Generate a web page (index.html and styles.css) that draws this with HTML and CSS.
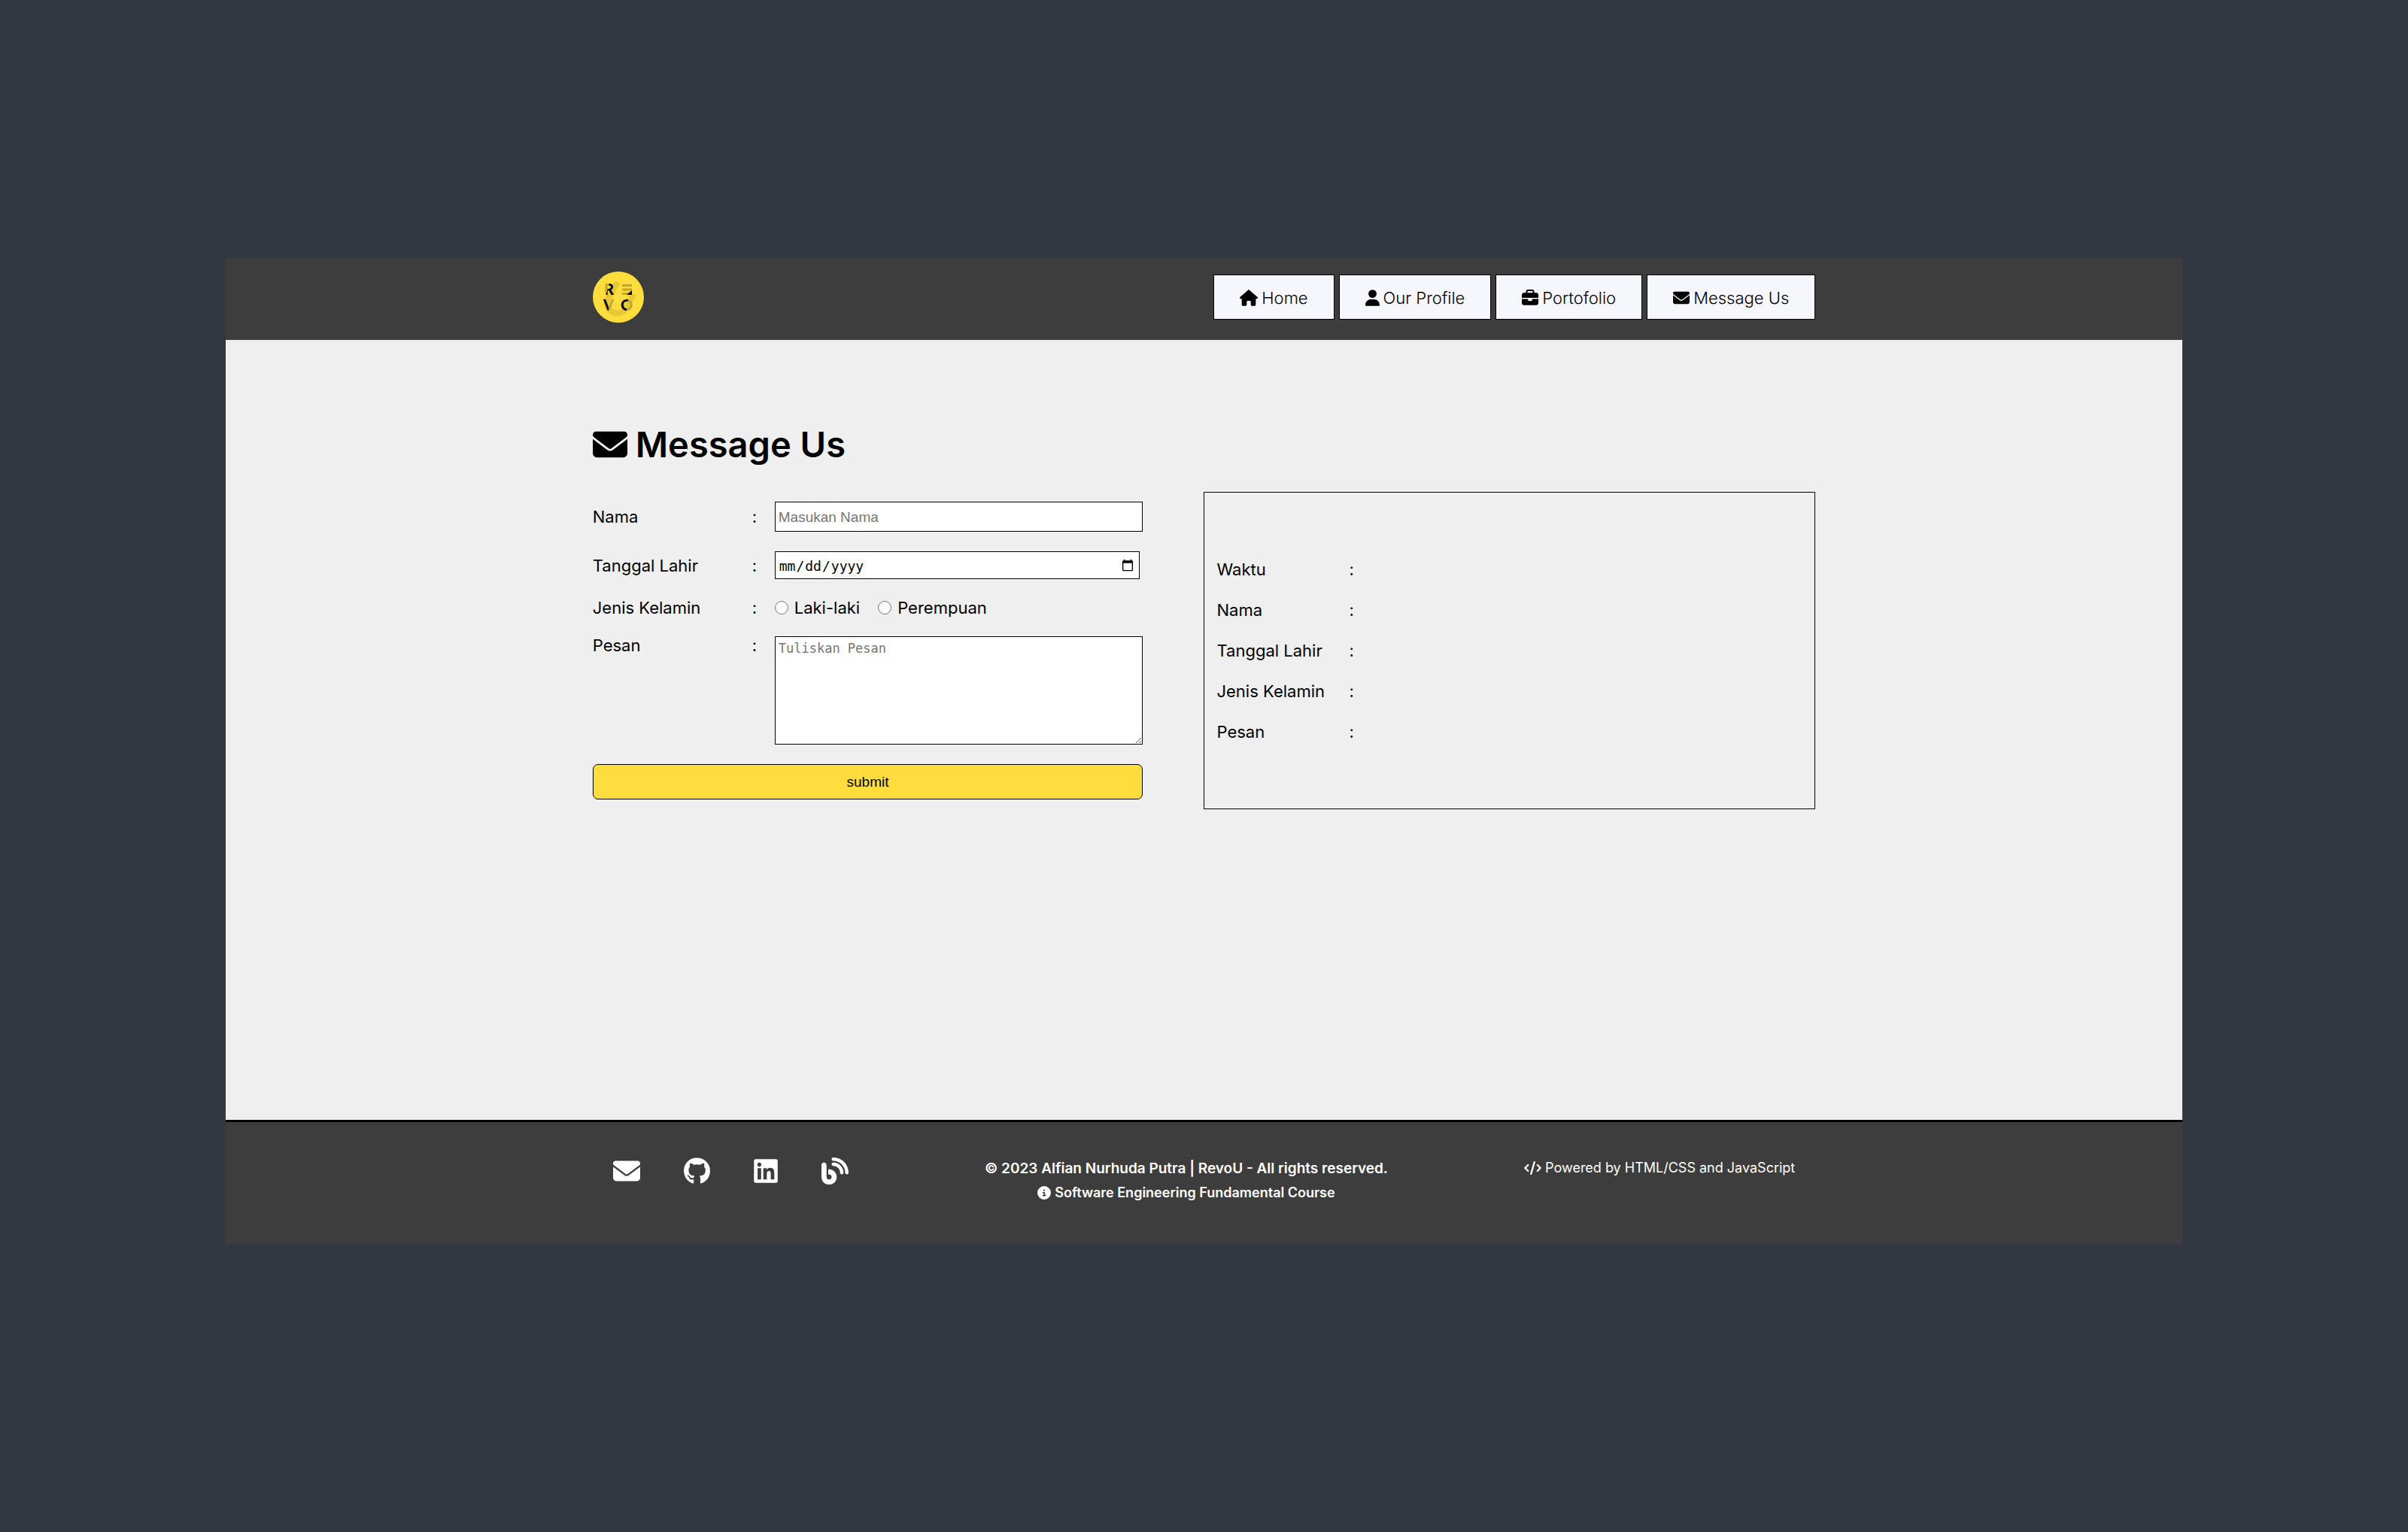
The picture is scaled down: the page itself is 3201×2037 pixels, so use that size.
FILE: index.html
```html
<!DOCTYPE html>
<html lang="id">
<head>
<meta charset="utf-8">
<meta name="viewport" content="width=device-width, initial-scale=1">
<title>Message Us</title>
<link rel="stylesheet" href="styles.css">
</head>
<body>
<svg class="sprite" aria-hidden="true">
  <symbol id="envelope" viewBox="0 0 512 512"><path d="M48 64C21.5 64 0 85.5 0 112c0 15.1 7.1 29.3 19.2 38.4L236.8 313.6c11.4 8.5 27 8.5 38.4 0L492.8 150.4c12.1-9.1 19.2-23.3 19.2-38.4c0-26.5-21.5-48-48-48H48zM0 176V384c0 35.3 28.7 64 64 64H448c35.3 0 64-28.7 64-64V176L294.4 339.2c-22.8 17.1-54 17.1-76.8 0L0 176z"/></symbol>
</svg>
<div class="shell">
  <header class="header">
    <div class="container header-row">
      <a class="logo" href="#" aria-label="RevoU">
        <svg viewBox="0 0 68 68" width="68" height="68">
          <defs>
            <linearGradient id="fadeLeft" x1="0" x2="1" y1="0" y2="0.5"><stop offset="0.45" stop-color="#c2a630"/><stop offset="0.5" stop-color="#0a0800"/></linearGradient>
            <linearGradient id="fadeRight" x1="0" x2="1" y1="0" y2="0.2"><stop offset="0.6" stop-color="#0a0800"/><stop offset="0.65" stop-color="#c2a630"/></linearGradient>
          </defs>
          <circle cx="34" cy="34" r="34" fill="#ffdd3d"/>
          <path d="M33 14 21 35a13 13 0 0 0 23 14L54 30" fill="none" stroke="#e8c935" stroke-width="8"/>
          <g class="logo-letters">
            <text x="15" y="31" fill="url(#fadeLeft)">R</text>
            <text x="14" y="52" fill="url(#fadeRight)">V</text>
            <text x="37" y="52" fill="url(#fadeRight)">O</text>
          </g>
          <path d="M39 18.500h13M39 24h13M39 29.500h13" stroke="#c2a630" stroke-width="3"/>
          <path d="M52 25v6h-7z" fill="#0a0800"/>
        </svg>
      </a>
      <nav class="nav">
        <a href="#"><svg class="icon" viewBox="0 0 576 512" width="24" height="22"><path d="M575.8 255.500c0 18-15 32.100-32 32.100h-32l.7 160.200c0 2.700-.2 5.400-.5 8.100V472c0 22.100-17.900 40-40 40H392c-22.100 0-40-17.900-40-40V384c0-17.700-14.300-32-32-32H256c-17.700 0-32 14.300-32 32v88c0 22.100-17.900 40-40 40H104c-22.100 0-40-17.900-40-40V287.600H32c-18 0-32-14-32-32.100c0-9 3-17 10-24L266.400 8c7-7 15-8 22-8s15 2 21 7L564.800 231.500c8 7 12 15 11 24z"/></svg>Home</a>
        <a href="#"><svg class="icon" viewBox="0 0 448 512" width="19" height="22"><path d="M224 256A128 128 0 1 0 224 0a128 128 0 1 0 0 256zm-45.700 48C79.800 304 0 383.800 0 482.300C0 498.700 13.300 512 29.700 512H418.300c16.400 0 29.700-13.300 29.700-29.700C448 383.800 368.200 304 269.700 304H178.300z"/></svg>Our Profile</a>
        <a href="#"><svg class="icon" viewBox="0 0 512 512" width="22" height="22"><path d="M184 48H328c4.400 0 8 3.600 8 8V96H176V56c0-4.400 3.600-8 8-8zm-56 8V96H64C28.700 96 0 124.700 0 160v96H512V160c0-35.300-28.700-64-64-64H384V56c0-30.900-25.100-56-56-56H184c-30.900 0-56 25.100-56 56zM512 288H320v32c0 17.700-14.300 32-32 32H224c-17.700 0-32-14.300-32-32V288H0V416c0 35.300 28.700 64 64 64H448c35.300 0 64-28.700 64-64V288z"/></svg>Portofolio</a>
        <a href="#"><svg class="icon" width="22" height="22"><use href="#envelope"/></svg>Message Us</a>
      </nav>
    </div>
  </header>

  <main class="main">
    <div class="container">
      <h1 class="title"><svg class="icon" width="46" height="46"><use href="#envelope"/></svg>Message Us</h1>
      <div class="columns">
        <form class="form">
          <label for="nama">Nama</label><span>:</span>
          <input class="field" id="nama" type="text" placeholder="Masukan Nama">
          <label for="lahir">Tanggal Lahir</label><span>:</span>
          <input class="field date" id="lahir" type="date">
          <span id="jk">Jenis Kelamin</span><span>:</span>
          <div class="radios" role="radiogroup" aria-labelledby="jk">
            <label><input type="radio" name="jk" value="l">Laki-laki</label>
            <label><input type="radio" name="jk" value="p">Perempuan</label>
          </div>
          <label class="top" for="pesan">Pesan</label><span class="top">:</span>
          <textarea class="field area" id="pesan" placeholder="Tuliskan Pesan"></textarea>
          <button class="submit" type="submit">submit</button>
        </form>
        <section class="result">
          <dl class="rows">
            <dt>Waktu</dt><dd>:</dd>
            <dt>Nama</dt><dd>:</dd>
            <dt>Tanggal Lahir</dt><dd>:</dd>
            <dt>Jenis Kelamin</dt><dd>:</dd>
            <dt>Pesan</dt><dd>:</dd>
          </dl>
        </section>
      </div>
    </div>
  </main>

  <footer class="footer">
    <div class="container footer-row">
      <div class="social">
        <a href="#" aria-label="Email"><svg class="icon" width="36" height="36"><use href="#envelope"/></svg></a>
        <a href="#" aria-label="GitHub"><svg class="icon" viewBox="0 0 496 512" width="35" height="36"><path d="M244.800 8C106.100 8 0 113.300 0 252c0 110.900 69.800 205.800 169.500 239.200 12.800 2.300 17.300-5.600 17.300-12.100 0-6.200-.3-40.400-.3-61.400 0 0-70 15-84.700-29.800 0 0-11.400-29.100-27.800-36.600 0 0-22.900-15.700 1.600-15.400 0 0 24.900 2 38.600 25.800 21.900 38.600 58.600 27.500 72.900 20.900 2.300-16 8.800-27.100 16-33.700-55.900-6.200-112.300-14.300-112.300-110.500 0-27.500 7.600-41.300 23.600-58.900-2.600-6.500-11.100-33.300 2.600-67.900 20.900-6.500 69 27 69 27 20-5.600 41.500-8.500 62.800-8.500s42.800 2.900 62.800 8.500c0 0 48.100-33.600 69-27 13.700 34.700 5.200 61.400 2.600 67.900 16 17.700 25.800 31.500 25.800 58.900 0 96.500-58.900 104.200-114.800 110.500 9.200 7.900 17 22.900 17 46.400 0 33.700-.3 75.400-.3 83.600 0 6.500 4.600 14.400 17.300 12.100C428.200 457.800 496 362.900 496 252 496 113.300 383.500 8 244.800 8z"/></svg></a>
        <a href="#" aria-label="LinkedIn"><svg class="icon" viewBox="0 0 448 512" width="32" height="36"><path d="M416 32H31.900C14.300 32 0 46.500 0 64.300v383.400C0 465.500 14.300 480 31.900 480H416c17.600 0 32-14.500 32-32.300V64.300c0-17.800-14.400-32.300-32-32.300zM135.400 416H69V202.200h66.500V416zm-33.200-243c-21.300 0-38.500-17.300-38.500-38.500S80.900 96 102.200 96c21.200 0 38.500 17.300 38.500 38.500 0 21.300-17.200 38.500-38.500 38.500zm282.100 243h-66.400V312c0-24.800-.5-56.700-34.500-56.700-34.600 0-39.900 27-39.900 54.900V416h-66.400V202.200h63.700v29.200h.9c8.900-16.800 30.600-34.500 62.900-34.500 67.200 0 79.700 44.300 79.700 101.900V416z"/></svg></a>
        <a href="#" aria-label="Blog"><svg class="icon" viewBox="0 0 512 512" width="36" height="36"><path d="M192 32c0 17.700 14.300 32 32 32c123.700 0 224 100.300 224 224c0 17.700 14.300 32 32 32s32-14.300 32-32C512 128.900 383.100 0 224 0c-17.700 0-32 14.300-32 32zm0 96c0 17.700 14.300 32 32 32c70.700 0 128 57.300 128 128c0 17.700 14.300 32 32 32s32-14.300 32-32c0-106-86-192-192-192c-17.700 0-32 14.300-32 32zM96 144c0-26.500-21.500-48-48-48S0 117.500 0 144V368c0 79.500 64.500 144 144 144s144-64.500 144-144s-64.500-144-144-144H128v96h16c26.500 0 48 21.500 48 48s-21.500 48-48 48s-48-21.500-48-48V144z"/></svg></a>
      </div>
      <div class="copy">
        <p>© 2023 Alfian Nurhuda Putra | RevoU - All rights reserved.</p>
        <p class="course"><svg class="icon" viewBox="0 0 512 512" width="18" height="18"><path d="M256 512A256 256 0 1 0 256 0a256 256 0 1 0 0 512zM216 336h24V272H216c-13.300 0-24-10.700-24-24s10.700-24 24-24h48c13.300 0 24 10.700 24 24v88h8c13.300 0 24 10.700 24 24s-10.700 24-24 24H216c-13.300 0-24-10.700-24-24s10.700-24 24-24zm40-208a32 32 0 1 1 0 64 32 32 0 1 1 0-64z"/></svg>Software Engineering Fundamental Course</p>
      </div>
      <p class="powered"><svg class="icon" viewBox="0 0 640 512" width="23" height="18"><path d="M392.800 1.200c-17-4.900-34.700 5-39.600 22l-128 448c-4.900 17 5 34.700 22 39.600s34.700-5 39.600-22l128-448c4.900-17-5-34.700-22-39.600zm80.600 120.100c-12.500 12.500-12.500 32.800 0 45.300L562.700 256l-89.400 89.400c-12.500 12.500-12.500 32.800 0 45.300s32.800 12.500 45.300 0l112-112c12.500-12.500 12.500-32.800 0-45.300l-112-112c-12.500-12.500-32.800-12.500-45.300 0zm-306.700 0c-12.500-12.500-32.800-12.500-45.300 0l-112 112c-12.500 12.500-12.500 32.800 0 45.300l112 112c12.500 12.500 32.800 12.500 45.300 0s12.500-32.800 0-45.300L77.300 256l89.400-89.400c12.500-12.500 12.500-32.800 0-45.300z"/></svg>Powered by HTML/CSS and JavaScript</p>
    </div>
  </footer>
</div>
</body>
</html>
```
FILE: styles.css
```css
* { box-sizing: border-box; }

body {
  margin: 0;
  padding: 343px 0;
  background: #313841;
  color: #000;
  font-family: Inter, "Open Sans", sans-serif;
  font-size: 22px;
  line-height: 24px;
}

h1, p, dl, dd { margin: 0; }
a { color: inherit; text-decoration: none; }
.sprite { display: none; }
.icon { display: block; flex: none; fill: currentColor; }

.shell { width: 81.25%; margin: 0 auto; background: #efefef; }
.container { width: 62.5%; margin: 0 auto; }

.header { background: #3d3d3d; }
.header-row { display: flex; justify-content: space-between; align-items: center; padding: 18px 0 23px; }
.logo svg { display: block; }
.logo-letters { font: 900 20px Lato, sans-serif; }

.nav { display: flex; gap: 6px; }
.nav a {
  display: flex;
  align-items: center;
  gap: 5px;
  padding: 18px 34px 16px;
  border: 1px solid #000;
  background: #f6f7fc;
  font-weight: 300;
}

.main { min-height: 1037px; padding-top: 111px; }
.title {
  display: flex;
  align-items: center;
  gap: 11px;
  font-size: 47px;
  line-height: 56px;
  font-weight: 600;
}

.columns { display: grid; grid-template-columns: 45fr 50fr; column-gap: 5%; margin-top: 35px; }

.form {
  display: grid;
  grid-template-columns: 212px 30px 1fr;
  row-gap: 26px;
  align-items: center;
  padding: 13px 0;
}
.form .top { align-self: start; }

.field {
  width: 100%;
  height: 40px;
  margin: 0;
  padding: 3px 4px 2px;
  border: 1px solid #000;
  border-radius: 0;
  background: #fff;
  font: 19px "Liberation Sans", sans-serif;
}
.field::placeholder { color: #757575; }
.date { width: calc(100% - 4px); height: 37px; font: 18px "DejaVu Sans Mono", monospace; }
.area { display: block; height: 144px; font: 17px "DejaVu Sans Mono", monospace; padding: 5px 4px; }

.radios { display: flex; gap: 24px; }
.radios label { display: flex; align-items: center; gap: 8px; }
.radios input { width: 18px; height: 18px; margin: 0; }

.submit {
  grid-column: 1 / -1;
  height: 47px;
  border: 1px solid #000;
  border-radius: 7px;
  background: #ffdd3d;
  color: #000;
  font: 19px "Liberation Sans", sans-serif;
}

.result { display: flex; align-items: center; padding: 0 16px; border: 1px solid #000; }
.rows { display: grid; grid-template-columns: 176px 1fr; row-gap: 22px; line-height: 32px; }

.footer { border-top: 3px solid #000; background: #3d3d3d; color: #fff; }
.footer-row { display: flex; justify-content: space-between; align-items: flex-start; padding: 47px 27px 56px; }
.social { display: flex; gap: 58px; }
.copy { padding-top: 3px; text-align: center; font-size: 19px; font-weight: 600; }
.copy p + p { margin-top: 8px; }
.course, .powered { display: flex; justify-content: center; align-items: center; gap: 5px; font-size: 18px; }
.powered { padding-top: 2px; }
```
